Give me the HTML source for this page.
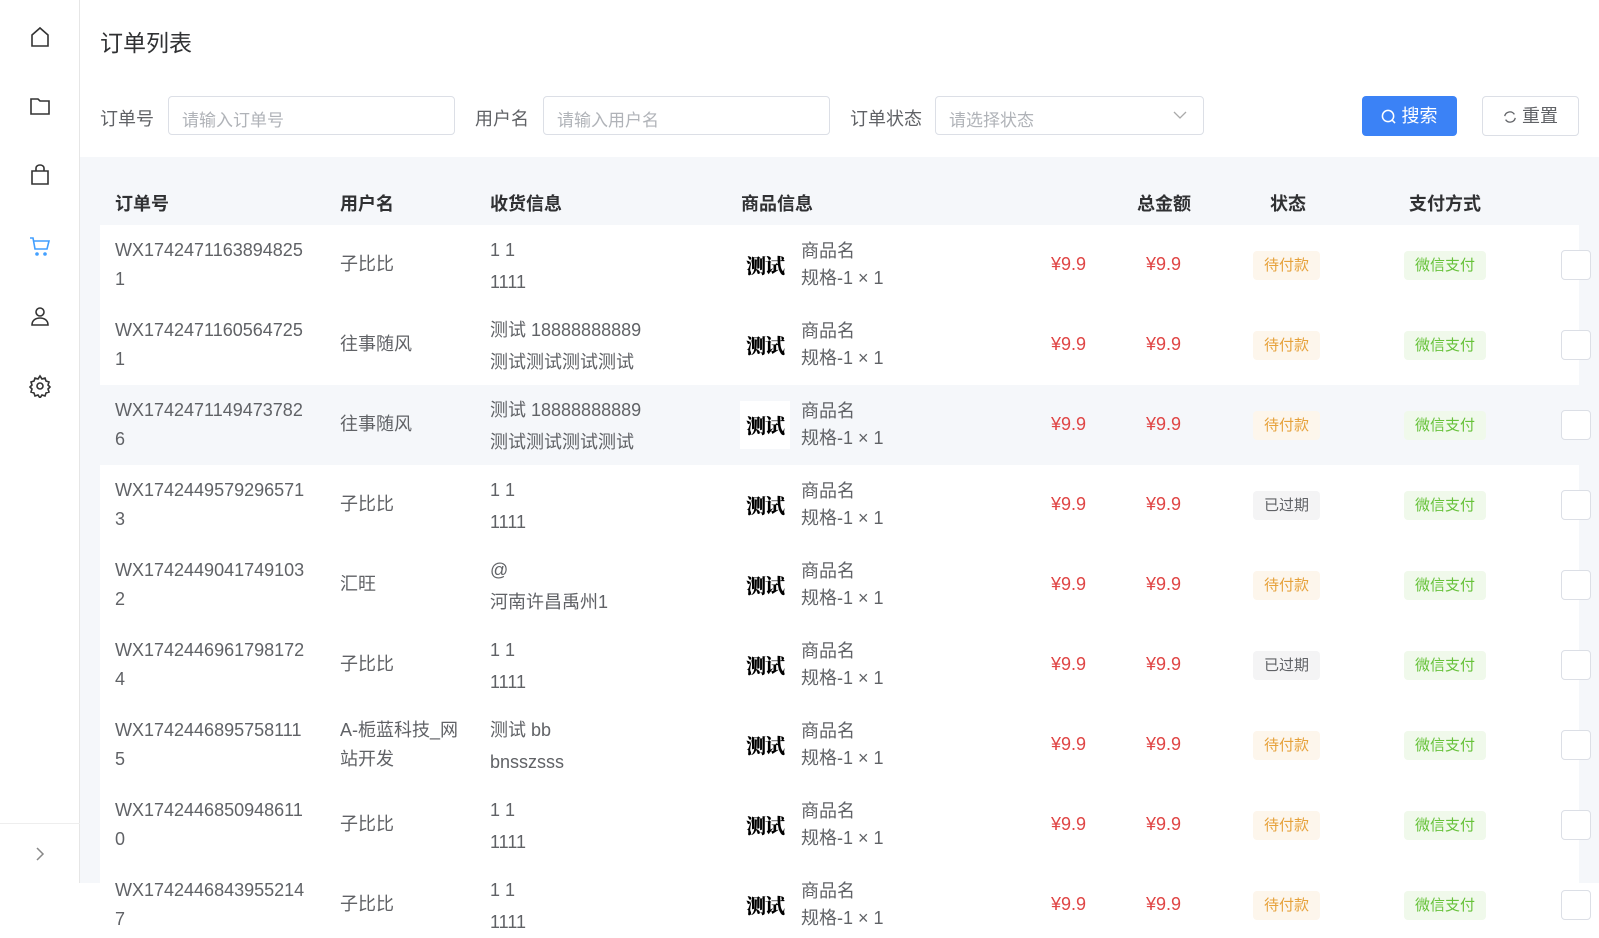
<!DOCTYPE html>
<html><head><meta charset="utf-8"><style>
*{margin:0;padding:0;box-sizing:border-box}
body{width:1599px;height:883px;overflow:hidden;background:#fff;font-family:"Liberation Sans","Noto Sans CJK SC",sans-serif;color:#606266;position:relative}
.a{position:absolute}
.side{left:0;top:0;width:80px;height:883px;border-right:1px solid #e6e6e6;background:#fff}
.ic{position:absolute;left:28px;width:24px;height:24px}
.lbl{font-size:18px;color:#606266}
.inp{border:1px solid #dcdfe6;border-radius:4px;height:39px;font-size:17px;color:#b0b3b8;padding:9px 13px;background:#fff}
.hd{font-size:18px;font-weight:bold;color:#303133;top:190px}
.t{font-size:18px;color:#606266;line-height:29px;white-space:nowrap}
.red{color:#e04545;font-size:18px}
.tag{font-size:15px;height:29px;line-height:29px;padding:0 11px;border-radius:4px;white-space:nowrap}
.pend{background:#fdf6ec;color:#e6a23c}
.exp{background:#f4f4f5;color:#606266}
.wx{background:#f0f9eb;color:#67c23a}
.img{width:50px;height:48px;background:#fff;font-family:"Noto Serif CJK SC",serif;font-weight:900;font-size:20px;color:#000;text-align:center;line-height:48px;letter-spacing:-1px}
.btn{width:30px;height:30px;border:1px solid #dcdfe6;border-radius:4px;background:#fff}
</style></head><body>
<div class="a side">
<svg class="ic" style="top:25px" viewBox="0 0 24 24" fill="none" stroke="#333" stroke-width="1.6"><path d="M4 10 12 3l8 7v11H4z"/></svg>
<svg class="ic" style="top:94px" viewBox="0 0 24 24" fill="none" stroke="#333" stroke-width="1.6"><path d="M3 5h7l2 2h9v13H3z"/></svg>
<svg class="ic" style="top:163px" viewBox="0 0 24 24" fill="none" stroke="#333" stroke-width="1.6"><path d="M4 8h16v13H4zM8 8V5a4 3 0 0 1 8 0v3"/></svg>
<svg class="ic" style="top:234px" viewBox="0 0 24 24" fill="none" stroke="#409eff" stroke-width="1.6"><path d="M2 4h3l2 11h12l2-8H6"/><circle cx="9" cy="20" r="1"/><circle cx="17" cy="20" r="1"/></svg>
<svg class="ic" style="top:304px" viewBox="0 0 24 24" fill="none" stroke="#333" stroke-width="1.6"><circle cx="12" cy="8" r="4"/><path d="M4 21c0-5 4-7 8-7s8 2 8 7z"/></svg>
<svg class="ic" style="top:374px" viewBox="0 0 24 24" fill="none" stroke="#333" stroke-width="1.6"><circle cx="12" cy="12" r="3"/><path d="M12 2l2 3 3-1 1 3 3 1-1 3 2 2-2 2 1 3-3 1-1 3-3-1-2 3-2-3-3 1-1-3-3-1 1-3-2-2 2-2-1-3 3-1 1-3 3 1z"/></svg>
<div class="a" style="left:0;top:823px;width:80px;border-top:1px solid #eee;height:60px"></div>
<svg class="a" style="left:34px;top:846px" width="12" height="16" viewBox="0 0 12 16" fill="none" stroke="#888" stroke-width="1.5"><path d="M3 2l6 6-6 6"/></svg>
</div>
<div class="a" style="left:100px;top:24px;font-size:23px;color:#303133">订单列表</div>
<div class="a lbl" style="left:100px;top:105px">订单号</div>
<div class="a inp" style="left:168px;top:96px;width:287px">请输入订单号</div>
<div class="a lbl" style="left:475px;top:105px">用户名</div>
<div class="a inp" style="left:543px;top:96px;width:287px">请输入用户名</div>
<div class="a lbl" style="left:850px;top:105px">订单状态</div>
<div class="a inp" style="left:935px;top:96px;width:269px">请选择状态</div>
<svg class="a" style="left:1173px;top:110px" width="14" height="10" viewBox="0 0 14 10" fill="none" stroke="#aaa" stroke-width="1.3"><path d="M1 2l6 6 6-6"/></svg>
<div class="a" style="left:1362px;top:96px;width:95px;height:40px;background:#3b82f6;border-radius:4px;color:#fff;font-size:18px;line-height:40px;text-align:center">
<svg width="15" height="15" viewBox="0 0 16 16" fill="none" stroke="#fff" stroke-width="1.6" style="vertical-align:-2px"><circle cx="7.5" cy="7.5" r="6"/><path d="M12 12l3 3"/></svg> 搜索</div>
<div class="a" style="left:1482px;top:96px;width:97px;height:40px;border:1px solid #dcdfe6;border-radius:4px;color:#606266;font-size:18px;line-height:38px;text-align:center">
<svg width="14" height="14" viewBox="0 0 16 16" fill="none" stroke="#606266" stroke-width="1.5" style="vertical-align:-2px"><path d="M13 5A6 6 0 0 0 2 7M3 11a6 6 0 0 0 11-2"/></svg> 重置</div>
<div class="a" style="left:80px;top:157px;width:1519px;height:726px;background:#f5f7fa"></div>
<div class="a" style="left:100px;top:225px;width:1479px;height:658px;background:#fff"></div>
<div class="a" style="left:100px;top:385px;width:1479px;height:80px;background:#f5f7fa"></div>
<div class="a hd" style="left:115px">订单号</div>
<div class="a hd" style="left:340px">用户名</div>
<div class="a hd" style="left:490px">收货信息</div>
<div class="a hd" style="left:741px">商品信息</div>
<div class="a hd" style="left:1137px">总金额</div>
<div class="a hd" style="left:1270px">状态</div>
<div class="a hd" style="left:1409px">支付方式</div>
<div id="rows"></div>
<script>
var d=[["WX1742471163894825","1","子比比","1 1","1111","p"],
["WX1742471160564725","1","往事随风","测试 18888888889","测试测试测试测试","p"],
["WX1742471149473782","6","往事随风","测试 18888888889","测试测试测试测试","p"],
["WX1742449579296571","3","子比比","1 1","1111","e"],
["WX1742449041749103","2","汇旺","@","河南许昌禹州1","p"],
["WX1742446961798172","4","子比比","1 1","1111","e"],
["WX1742446895758111","5","A-栀蓝科技_网<br>站开发","测试 bb","bnsszsss","p"],
["WX1742446850948611","0","子比比","1 1","1111","p"],
["WX1742446843955214","7","子比比","1 1","1111","p"]];
var h="";
d.forEach(function(r,i){var c=265+80*i;
h+='<div class="a t" style="left:115px;top:'+(c-29)+'px">'+r[0]+'<br>'+r[1]+'</div>';
var two=r[2].indexOf('<br>')>0;
h+='<div class="a t" style="left:340px;top:'+(c-(two?29:15))+'px">'+r[2]+'</div>';
h+='<div class="a t" style="left:490px;top:'+(c-31)+'px;line-height:32px">'+r[3]+'<br>'+r[4]+'</div>';
h+='<div class="a img" style="left:740px;top:'+(c-24)+'px">测试</div>';
h+='<div class="a t" style="left:801px;top:'+(c-27)+'px;line-height:27px">商品名<br>规格-1 × 1</div>';
h+='<div class="a red" style="left:1051px;top:'+(c-11)+'px">¥9.9</div>';
h+='<div class="a red" style="left:1146px;top:'+(c-11)+'px">¥9.9</div>';
h+='<div class="a tag '+(r[5]=="p"?"pend":"exp")+'" style="left:1253px;top:'+(c-14)+'px">'+(r[5]=="p"?"待付款":"已过期")+'</div>';
h+='<div class="a tag wx" style="left:1404px;top:'+(c-14)+'px">微信支付</div>';
h+='<div class="a btn" style="left:1561px;top:'+(c-15)+'px"></div>';
});
document.getElementById('rows').innerHTML=h;
</script>
</body></html>
